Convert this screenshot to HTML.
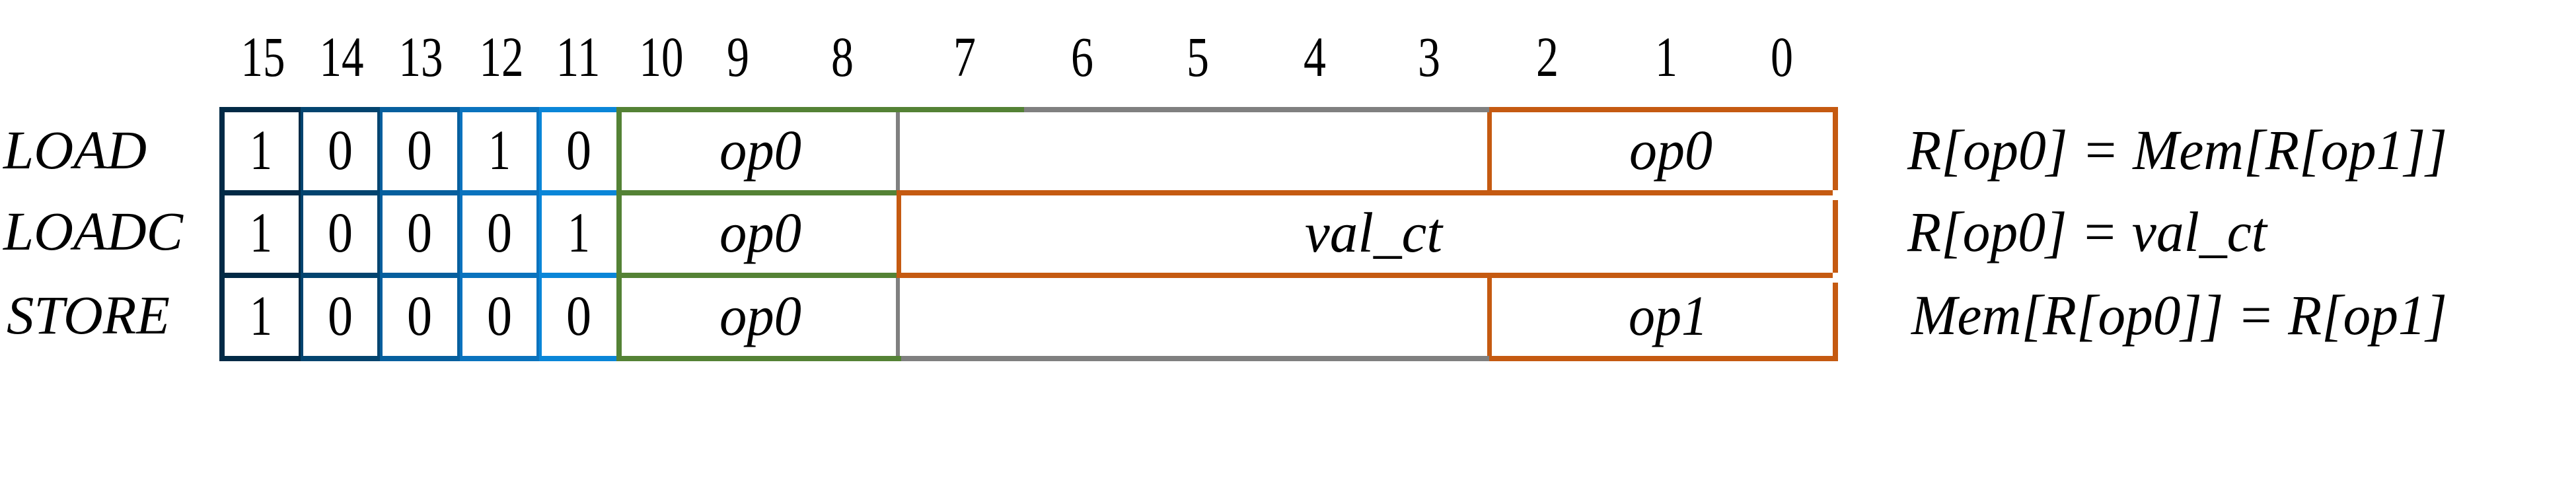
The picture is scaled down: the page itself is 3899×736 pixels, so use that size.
<!DOCTYPE html>
<html><head><meta charset="utf-8"><style>
html,body{margin:0;padding:0;background:#fff;}
svg{display:block;}
svg text{font-family:"Liberation Serif","DejaVu Serif","Noto Serif CJK SC",serif;fill:#000;}
</style></head><body>
<svg width="3899" height="736" viewBox="0 0 3899 736" xmlns="http://www.w3.org/2000/svg">
<rect width="3899" height="736" fill="#fff"/>
<g font-size="86" text-anchor="middle">
<text x="398" y="115" textLength="67" lengthAdjust="spacingAndGlyphs">15</text>
<text x="517" y="115" textLength="67" lengthAdjust="spacingAndGlyphs">14</text>
<text x="637" y="115" textLength="67" lengthAdjust="spacingAndGlyphs">13</text>
<text x="759" y="115" textLength="67" lengthAdjust="spacingAndGlyphs">12</text>
<text x="875" y="115" textLength="67" lengthAdjust="spacingAndGlyphs">11</text>
<text x="1001" y="115" textLength="67" lengthAdjust="spacingAndGlyphs">10</text>
<text x="1117" y="115" textLength="34" lengthAdjust="spacingAndGlyphs">9</text>
<text x="1275" y="115" textLength="34" lengthAdjust="spacingAndGlyphs">8</text>
<text x="1460" y="115" textLength="34" lengthAdjust="spacingAndGlyphs">7</text>
<text x="1638" y="115" textLength="34" lengthAdjust="spacingAndGlyphs">6</text>
<text x="1813" y="115" textLength="34" lengthAdjust="spacingAndGlyphs">5</text>
<text x="1990" y="115" textLength="34" lengthAdjust="spacingAndGlyphs">4</text>
<text x="2163" y="115" textLength="34" lengthAdjust="spacingAndGlyphs">3</text>
<text x="2342" y="115" textLength="34" lengthAdjust="spacingAndGlyphs">2</text>
<text x="2522" y="115" textLength="34" lengthAdjust="spacingAndGlyphs">1</text>
<text x="2697" y="115" textLength="34" lengthAdjust="spacingAndGlyphs">0</text>
</g>
<g font-size="83" font-style="italic">
<text x="5" y="255" textLength="217" lengthAdjust="spacingAndGlyphs">LOAD</text>
<text x="5" y="378" textLength="272" lengthAdjust="spacingAndGlyphs">LOADC</text>
<text x="10" y="505" textLength="247" lengthAdjust="spacingAndGlyphs">STORE</text>
</g>
<g>
<rect x="332" y="162" width="123" height="385" fill="#022a46"/>
<rect x="455" y="162" width="120" height="385" fill="#03446f"/>
<rect x="575" y="162" width="121" height="385" fill="#065f9e"/>
<rect x="696" y="162" width="120" height="385" fill="#0a73be"/>
<rect x="816" y="162" width="121" height="385" fill="#0a86d8"/>
<rect x="340" y="170" width="112" height="118" fill="#fff"/>
<rect x="340" y="296" width="112" height="117" fill="#fff"/>
<rect x="340" y="421" width="112" height="118" fill="#fff"/>
<rect x="459" y="170" width="112" height="118" fill="#fff"/>
<rect x="459" y="296" width="112" height="117" fill="#fff"/>
<rect x="459" y="421" width="112" height="118" fill="#fff"/>
<rect x="579" y="170" width="113" height="118" fill="#fff"/>
<rect x="579" y="296" width="113" height="117" fill="#fff"/>
<rect x="579" y="421" width="113" height="118" fill="#fff"/>
<rect x="700" y="170" width="112" height="118" fill="#fff"/>
<rect x="700" y="296" width="112" height="117" fill="#fff"/>
<rect x="700" y="421" width="112" height="118" fill="#fff"/>
<rect x="820" y="170" width="113" height="118" fill="#fff"/>
<rect x="820" y="296" width="113" height="117" fill="#fff"/>
<rect x="820" y="421" width="113" height="118" fill="#fff"/>
</g>
<g fill="#548235">
<rect x="933" y="162" width="617" height="8"/>
<rect x="933" y="288" width="427" height="8"/>
<rect x="933" y="413" width="427" height="8"/>
<rect x="933" y="539" width="431" height="8"/>
<rect x="933" y="162" width="8" height="385"/>
</g>
<g fill="#808080">
<rect x="1550" y="162" width="704" height="8"/>
<rect x="1364" y="539" width="890" height="8"/>
<rect x="1356" y="170" width="6" height="118"/>
<rect x="1356" y="421" width="6" height="118"/>
</g>
<g fill="#c55a11">
<rect x="2254" y="162" width="528" height="8"/>
<rect x="1360" y="288" width="1414" height="8"/>
<rect x="1360" y="413" width="1414" height="8"/>
<rect x="2254" y="539" width="528" height="8"/>
<rect x="2251" y="170" width="7" height="118"/>
<rect x="2251" y="421" width="7" height="118"/>
<rect x="1357" y="288" width="7" height="133"/>
<rect x="2774" y="162" width="8" height="126"/>
<rect x="2774" y="303" width="8" height="110"/>
<rect x="2774" y="428" width="8" height="119"/>
</g>
<g font-size="86" text-anchor="middle">
<text x="395" y="256" textLength="34" lengthAdjust="spacingAndGlyphs">1</text>
<text x="515" y="256" textLength="38" lengthAdjust="spacingAndGlyphs">0</text>
<text x="635" y="256" textLength="38" lengthAdjust="spacingAndGlyphs">0</text>
<text x="756" y="256" textLength="34" lengthAdjust="spacingAndGlyphs">1</text>
<text x="876" y="256" textLength="38" lengthAdjust="spacingAndGlyphs">0</text>
<text x="395" y="381" textLength="34" lengthAdjust="spacingAndGlyphs">1</text>
<text x="515" y="381" textLength="38" lengthAdjust="spacingAndGlyphs">0</text>
<text x="635" y="381" textLength="38" lengthAdjust="spacingAndGlyphs">0</text>
<text x="756" y="381" textLength="38" lengthAdjust="spacingAndGlyphs">0</text>
<text x="876" y="381" textLength="34" lengthAdjust="spacingAndGlyphs">1</text>
<text x="395" y="507" textLength="34" lengthAdjust="spacingAndGlyphs">1</text>
<text x="515" y="507" textLength="38" lengthAdjust="spacingAndGlyphs">0</text>
<text x="635" y="507" textLength="38" lengthAdjust="spacingAndGlyphs">0</text>
<text x="756" y="507" textLength="38" lengthAdjust="spacingAndGlyphs">0</text>
<text x="876" y="507" textLength="38" lengthAdjust="spacingAndGlyphs">0</text>
</g>
<g font-size="86" font-style="italic" text-anchor="middle">
<text x="1151" y="256" textLength="124" lengthAdjust="spacingAndGlyphs">op0</text>
<text x="1151" y="381" textLength="124" lengthAdjust="spacingAndGlyphs">op0</text>
<text x="1151" y="507" textLength="124" lengthAdjust="spacingAndGlyphs">op0</text>
<text x="2529" y="256" textLength="126" lengthAdjust="spacingAndGlyphs">op0</text>
<text x="2079" y="381" textLength="208" lengthAdjust="spacingAndGlyphs">val_ct</text>
<text x="2525" y="507" textLength="120" lengthAdjust="spacingAndGlyphs">op1</text>
</g>
<g font-size="86" font-style="italic">
<text x="2887" y="256" textLength="817" lengthAdjust="spacingAndGlyphs">R[op0] = Mem[R[op1]]</text>
<text x="2887" y="380" textLength="544" lengthAdjust="spacingAndGlyphs">R[op0] = val_ct</text>
<text x="2893" y="506" textLength="811" lengthAdjust="spacingAndGlyphs">Mem[R[op0]] = R[op1]</text>
</g>
</svg>
</body></html>
